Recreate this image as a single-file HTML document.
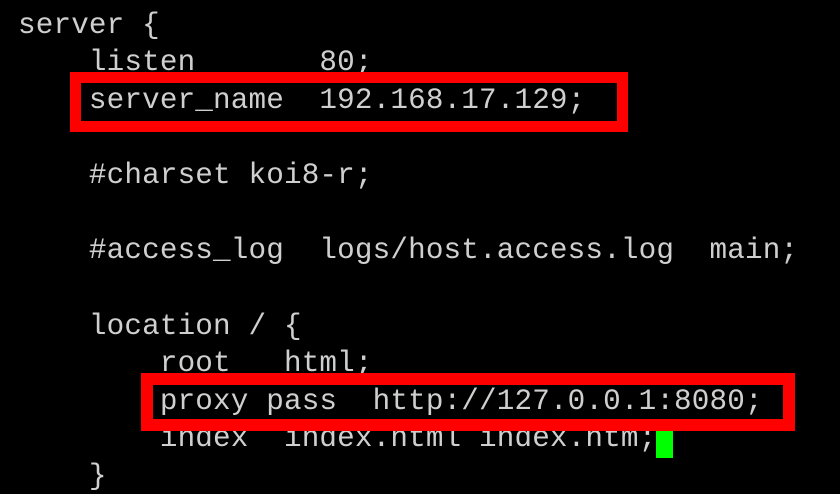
<!DOCTYPE html>
<html><head><meta charset="utf-8"><style>
html,body{margin:0;padding:0;background:#000;width:840px;height:494px;overflow:hidden;position:relative}
.l{position:absolute;left:18px;font-family:"Liberation Mono","DejaVu Sans Mono",monospace;font-size:29.3px;line-height:30px;color:#cfcfcf;white-space:pre;letter-spacing:0.15px}
.b{position:absolute;border:11px solid #f00;box-sizing:border-box}
.c{position:absolute;background:#00ff00}
</style></head><body>
<div class="l" style="top:11px">server {</div>
<div class="l" style="top:48px">    listen       80;</div>
<div class="l" style="top:86px">    server_name  192.168.17.129;</div>
<div class="l" style="top:161px">    #charset koi8-r;</div>
<div class="l" style="top:236px">    #access_log  logs/host.access.log  main;</div>
<div class="l" style="top:312px">    location / {</div>
<div class="l" style="top:349px">        root   html;</div>
<div class="l" style="top:387px">        proxy pass  http://127.0.0.1:8080;</div>
<div class="l" style="top:424px">        index  index.html index.htm;</div>
<div class="c" style="left:656px;top:431px;width:17px;height:27px"></div>
<div class="l" style="top:462px">    }</div>
<div class="b" style="left:70px;top:72px;width:558px;height:60px"></div>
<div class="b" style="left:141px;top:373px;width:654px;height:58px;border-width:12px"></div>
</body></html>
